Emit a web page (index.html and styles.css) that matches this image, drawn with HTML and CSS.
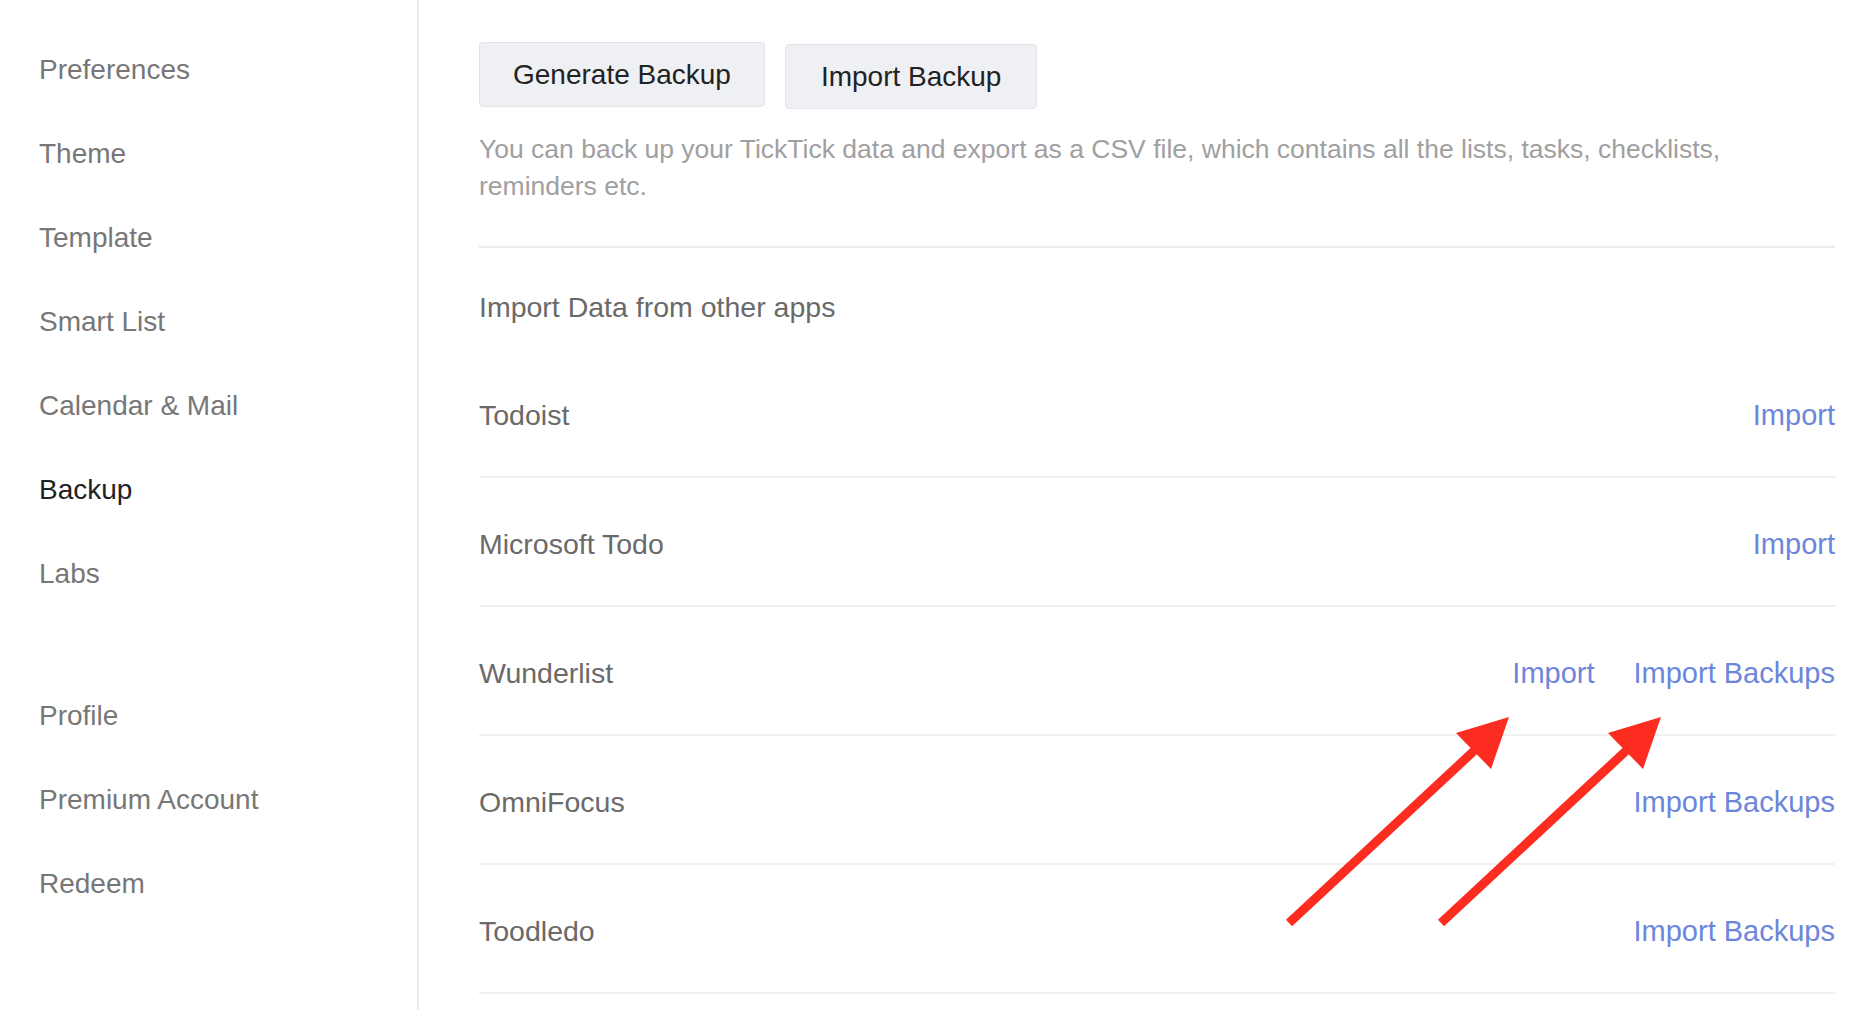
FILE: index.html
```html
<!DOCTYPE html>
<html lang="en">
<head>
<meta charset="utf-8">
<title>Settings - Backup</title>
<link rel="stylesheet" href="styles.css">
</head>
<body>
<div class="page">
  <nav class="sidebar">
    <ul class="nav-group">
      <li class="nav-item">Preferences</li>
      <li class="nav-item">Theme</li>
      <li class="nav-item">Template</li>
      <li class="nav-item">Smart List</li>
      <li class="nav-item">Calendar &amp; Mail</li>
      <li class="nav-item active">Backup</li>
      <li class="nav-item">Labs</li>
    </ul>
    <ul class="nav-group nav-group-second">
      <li class="nav-item">Profile</li>
      <li class="nav-item">Premium Account</li>
      <li class="nav-item">Redeem</li>
    </ul>
  </nav>
  <main class="content">
    <div class="btn-row">
      <button class="btn btn-generate">Generate Backup</button>
      <button class="btn btn-import">Import Backup</button>
    </div>
    <p class="desc">You can back up your TickTick data and export as a CSV file, which contains all the lists, tasks, checklists, reminders etc.</p>
    <div class="section">
      <h2 class="section-title">Import Data from other apps</h2>
      <div class="row">
        <span class="row-name">Todoist</span>
        <div class="row-links"><a class="link">Import</a></div>
      </div>
      <div class="row">
        <span class="row-name">Microsoft Todo</span>
        <div class="row-links"><a class="link">Import</a></div>
      </div>
      <div class="row">
        <span class="row-name">Wunderlist</span>
        <div class="row-links"><a class="link">Import</a><a class="link">Import Backups</a></div>
      </div>
      <div class="row">
        <span class="row-name">OmniFocus</span>
        <div class="row-links"><a class="link">Import Backups</a></div>
      </div>
      <div class="row">
        <span class="row-name">Toodledo</span>
        <div class="row-links"><a class="link">Import Backups</a></div>
      </div>
    </div>
  </main>
  <svg class="annotations" width="1871" height="1010" viewBox="0 0 1871 1010" xmlns="http://www.w3.org/2000/svg">
    <g fill="#fc2d20" stroke="#fc2d20">
      <line x1="1289" y1="923" x2="1476" y2="749" stroke-width="9"/>
      <polygon points="1509,717 1456,733 1491,769" stroke="none"/>
      <line x1="1441" y1="923" x2="1628" y2="749" stroke-width="9"/>
      <polygon points="1661,717 1608,733 1643,769" stroke="none"/>
    </g>
  </svg>
</div>
</body>
</html>
```

FILE: styles.css
```css
* {
  box-sizing: border-box;
}

html, body {
  margin: 0;
  padding: 0;
  background: #ffffff;
}

body {
  font-family: "Liberation Sans", Arial, Helvetica, sans-serif;
  font-size: 28px;
  width: 1871px;
  height: 1010px;
  overflow: hidden;
}

.page {
  position: relative;
  display: flex;
  width: 1871px;
  height: 1010px;
}

/* Sidebar */
.sidebar {
  width: 419px;
  flex-shrink: 0;
  border-right: 2px solid #ececec;
  padding-top: 28px;
}

.nav-group {
  list-style: none;
  margin: 0;
  padding: 0;
}

.nav-group-second {
  margin-top: 58px;
}

.nav-item {
  height: 84px;
  line-height: 84px;
  padding-left: 39px;
  color: #777777;
  white-space: nowrap;
}

.nav-item.active {
  color: #222222;
}

/* Main content */
.content {
  flex: 1;
  padding: 42px 36px 0 60px;
}

.btn-row {
  display: flex;
  align-items: flex-start;
  gap: 20px;
}

.btn {
  font-family: inherit;
  font-size: 28px;
  color: #222222;
  background: #eff0f4;
  border: 1px solid #e2e3e8;
  border-radius: 4px;
  height: 65px;
  line-height: 32px;
  cursor: pointer;
}

.btn-generate {
  padding: 0 33px;
}

.btn-import {
  padding: 0 35px;
  margin-top: 2px;
}

.desc {
  margin: 22px 0 0 0;
  padding-bottom: 41px;
  border-bottom: 2px solid #ebebeb;
  color: #a0a0a0;
  line-height: 37px;
  font-size: 26.5px;
}

.section-title {
  margin: 0 0 26px 0;
  padding-top: 43px;
  font-size: 28.5px;
  font-weight: normal;
  line-height: 32px;
  color: #6a6a6a;
}

.row {
  display: flex;
  align-items: center;
  justify-content: space-between;
  padding: 50px 0 45px 0;
  border-bottom: 2px solid #f0f0f0;
  line-height: 32px;
}

.row-name {
  color: #6a6a6a;
  font-size: 28.5px;
}

.row-links {
  display: flex;
  gap: 39px;
}

.link {
  color: #6c86db;
  font-size: 29px;
  text-decoration: none;
  cursor: pointer;
}

/* Overlay annotation arrows */
.annotations {
  position: absolute;
  top: 0;
  left: 0;
  pointer-events: none;
}
```
